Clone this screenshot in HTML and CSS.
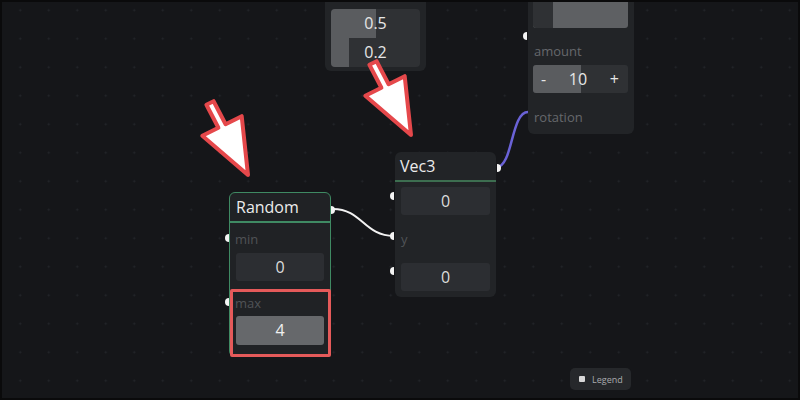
FILE: index.html
```html
<!DOCTYPE html>
<html lang="en">
<head>
    <meta charset="UTF-8">
    <title>Node editor</title>
    <link rel="stylesheet" href="styles.css">
</head>
<body>
    <div class="canvas">
        <!-- wires -->
        <svg class="wires" width="800" height="400" viewBox="0 0 800 400">
            <path class="wire" d="M333 209 C362 209 364 236 394 236"/>
            <path class="wire wire-rot" d="M497 167 C513 166 511 112 528 112"/>
        </svg>

        <!-- vector node at top -->
        <div class="node node-vec2">
            <div class="vec-box">
                <div class="vec-row">
                    <div class="fill" style="width: 45px"></div>
                    <span>0.5</span>
                </div>
                <div class="vec-row">
                    <div class="fill" style="width: 18px"></div>
                    <span>0.2</span>
                </div>
            </div>
        </div>

        <!-- transform node at top right -->
        <div class="node node-rot">
            <div class="slider">
                <div class="slider-dark"></div>
            </div>
            <div class="label">amount</div>
            <div class="number">
                <div class="fill" style="width: 48px"></div>
                <span class="step">-</span>
                <span class="num">10</span>
                <span class="step">+</span>
            </div>
            <div class="label label-rot">rotation</div>
            <span class="port port-in" style="top: 42px"></span>
        </div>

        <!-- Random -->
        <div class="node node-random">
            <div class="header">Random</div>
            <div class="field field-min">
                <div class="label">min</div>
                <div class="input">0</div>
            </div>
            <div class="field field-max">
                <div class="label">max</div>
                <div class="input active">4</div>
            </div>
            <span class="port port-in" style="top: 41px"></span>
            <span class="port port-in" style="top: 105px"></span>
            <span class="port port-out" style="top: 13px"></span>
        </div>
        <div class="highlight"></div>

        <!-- Vec3 -->
        <div class="node node-vec3">
            <div class="header">Vec3</div>
            <div class="rows">
                <div class="input">0</div>
                <div class="row-label">y</div>
                <div class="input">0</div>
            </div>
            <span class="port port-in" style="top: 40px"></span>
            <span class="port port-in" style="top: 80px"></span>
            <span class="port port-in" style="top: 115px"></span>
            <span class="port port-out" style="top: 12px"></span>
        </div>

        <!-- arrows -->
        <svg class="arrow arrow-a" width="62" height="90" viewBox="0 0 62 90">
            <polygon points="18.6,4.2 30.6,27.2 46.7,19.2 53,78 7.3,38.8 23.4,30.8 11.4,7.8"/>
        </svg>
        <svg class="arrow arrow-b" width="62" height="90" viewBox="0 0 62 90">
            <polygon points="18.6,4.2 30.6,27.2 46.7,19.2 53,78 7.3,38.8 23.4,30.8 11.4,7.8"/>
        </svg>

        <button class="legend"><span class="legend-box"></span>Legend</button>

        <div class="frame"></div>
    </div>
</body>
</html>
```

FILE: styles.css
```css
body {
    margin: 0;
    background-color: #151619;
    font-family: "Open Sans", "Liberation Sans", sans-serif;
    color: #e2e2e2;
}
.canvas {
    position: relative;
    width: 800px;
    height: 400px;
    overflow: hidden;
    background-color: #151619;
    background-image: radial-gradient(circle, #25272b 0.8px, transparent 1.2px);
    background-size: 28.5px 28.5px;
    background-position: 6px -4px;
}
.frame {
    position: absolute;
    inset: 0;
    box-shadow: inset 0 0 0 2px #0a0a0b;
    pointer-events: none;
}
.wires {
    position: absolute;
    left: 0;
    top: 0;
}
.wire {
    fill: none;
    stroke: #f2f2f2;
    stroke-width: 2;
}
.wire-rot {
    stroke: #6a62d6;
    stroke-width: 2.5;
}
.node {
    position: absolute;
    background-color: #202225;
    border-radius: 6px;
    box-sizing: border-box;
}
.header {
    height: 30px;
    line-height: 29px;
    padding-left: 6px;
    font-size: 16px;
    color: #ececec;
    box-sizing: border-box;
}
.label {
    font-size: 13px;
    line-height: 18px;
    color: #505356;
}
.input {
    height: 28px;
    line-height: 28px;
    text-align: center;
    font-size: 16px;
    color: #dcdcdc;
    background-color: #2c2e32;
    border-radius: 3px;
}
.input.active {
    height: 29px;
    background-color: #66686b;
    color: #f0f0f0;
}
.port {
    position: absolute;
    width: 4px;
    height: 8px;
    background-color: #f4f4f4;
}
.port-in {
    left: -5px;
    border-radius: 4px 0 0 4px;
}
.port-out {
    right: -5px;
    border-radius: 0 4px 4px 0;
}

/* Random */
.node-random {
    left: 229px;
    top: 192px;
    width: 102px;
    height: 165px;
    border: 1px solid #3f8a63;
}
.node-random .header {
    border-bottom: 2px solid #3f8a63;
}
.field {
    padding: 0 6px;
    display: flex;
    flex-direction: column;
    gap: 5px;
}
.field-min {
    padding-top: 7px;
}
.field-max {
    padding-top: 13px;
    gap: 4px;
}
.field .label {
    margin-left: -1px;
}
.highlight {
    position: absolute;
    left: 230px;
    top: 289px;
    width: 101px;
    height: 68px;
    border: 3px solid #e55a5a;
    box-sizing: border-box;
    border-radius: 2px;
}

/* Vec3 */
.node-vec3 {
    left: 395px;
    top: 152px;
    width: 101px;
    height: 145px;
    background-color: #222427;
}
.node-vec3 .header {
    border-bottom: 2px solid #3d6e50;
    padding-left: 5px;
}
.rows {
    padding: 6px 6px 0;
    display: flex;
    flex-direction: column;
    gap: 10px;
}
.node-vec3 .rows {
    padding-top: 5px;
}
.row-label {
    height: 28px;
    line-height: 28px;
    font-size: 13px;
    color: #505356;
}

/* top vector node */
.node-vec2 {
    left: 325px;
    top: -10px;
    width: 101px;
    height: 81px;
    background-color: #222427;
    padding: 19px 6px 0;
}
.vec-box {
    border-radius: 4px;
    overflow: hidden;
    background-color: #2f3134;
}
.vec-row {
    position: relative;
    height: 29px;
    line-height: 29px;
    text-align: center;
    font-size: 16px;
    color: #e6e6e6;
}
.vec-row .fill,
.number .fill {
    position: absolute;
    left: 0;
    top: 0;
    bottom: 0;
    background-color: #5a5c5f;
}
.vec-row span,
.number span {
    position: relative;
}

/* rotation node */
.node-rot {
    left: 528px;
    top: -10px;
    width: 106px;
    height: 144px;
    background-color: #222427;
    padding: 0 6px 0 5px;
    display: flex;
    flex-direction: column;
}
.slider {
    height: 38px;
    background-color: #5e6063;
    border-radius: 0 0 3px 3px;
    overflow: hidden;
}
.slider-dark {
    width: 20px;
    height: 100%;
    background-color: #2f3134;
}
.node-rot .label {
    margin-top: 14px;
    margin-left: 1px;
    color: #66686c;
}
.number {
    position: relative;
    margin-top: 5px;
    height: 28px;
    line-height: 28px;
    border-radius: 3px;
    overflow: hidden;
    background-color: #2f3134;
    display: flex;
    justify-content: space-between;
    padding: 0 9px 0 8px;
    font-size: 16px;
    color: #e6e6e6;
}
.node-rot .label-rot {
    margin-top: 15px;
}

/* arrows */
.arrow {
    position: absolute;
}
.arrow polygon {
    fill: #ffffff;
    stroke: #e5484b;
    stroke-width: 4;
    stroke-linejoin: round;
}
.arrow-a {
    left: 195px;
    top: 97px;
}
.arrow-b {
    left: 358px;
    top: 57px;
}

.legend {
    position: absolute;
    left: 570px;
    top: 368px;
    width: 61px;
    height: 22px;
    padding: 0 0 0 9px;
    border: none;
    border-radius: 5px;
    background-color: #26282b;
    color: #a9abae;
    font-family: "Open Sans", "Liberation Sans", sans-serif;
    font-size: 9px;
    display: flex;
    align-items: center;
    gap: 7px;
}
.legend-box {
    width: 6px;
    height: 6px;
    background-color: #d8d8d8;
    border-radius: 1px;
}
```
